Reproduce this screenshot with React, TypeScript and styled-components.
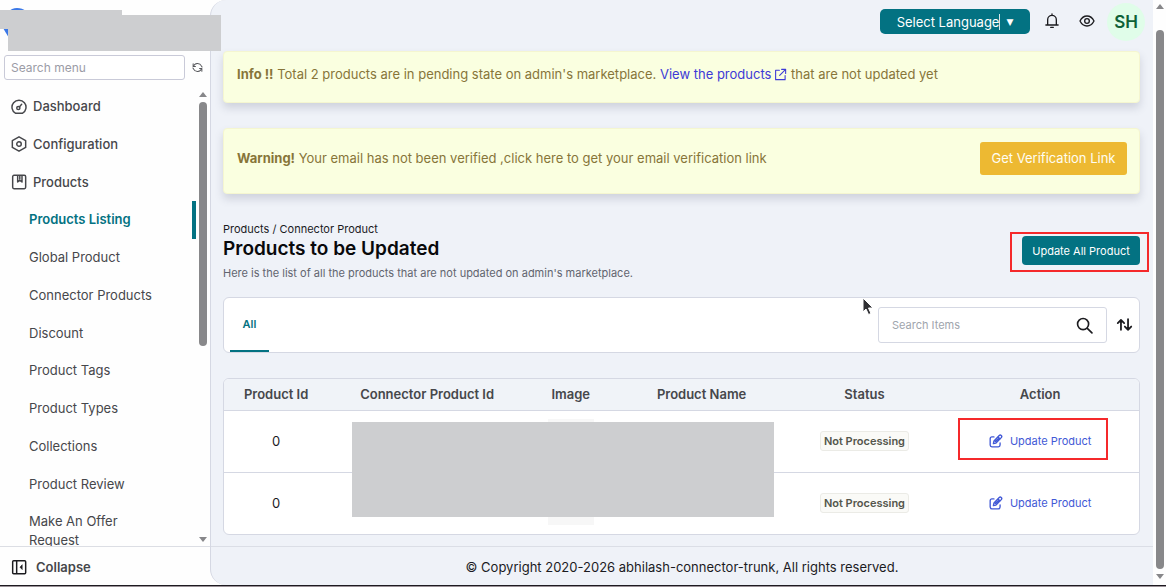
import React from "react";
import styled, { createGlobalStyle, css } from "styled-components";

const teal = "#037282";
const line = "#d5d8e3";
const ink = "#46474b";
const redaction = "#cdced0";

const GlobalStyle = createGlobalStyle`
  *, *::before, *::after { box-sizing: border-box; }
  body {
    margin: 0;
    background: #fefefe;
    color: #1b1b1f;
    font-family: Inter, "Liberation Sans", sans-serif;
    font-size: 13px;
    line-height: 18px;
  }
  button, input { font: inherit; }
  button { cursor: pointer; }
  a { text-decoration: none; }
  ul { list-style: none; margin: 0; padding: 0; }
`;

const Shell = styled.div`
  position: relative;
  display: grid;
  grid-template-columns: 210px minmax(0, 1fr) 13px;
  height: 100vh;
  overflow: hidden;
  border-bottom: 1px solid #9b9298;
  box-shadow: inset 0 -1px 0 #1d1a20;
  padding-bottom: 1px;
`;

const Sidebar = styled.aside`
  display: flex;
  flex-direction: column;
  min-height: 0;
`;

const Brand = styled.div`
  flex: none;
  height: 55px;
  padding: 8px 3px;
`;

const Redaction = styled.div<{ $x: number; $y: number; $w: number; $h: number }>`
  position: absolute;
  left: ${(p) => p.$x}px;
  top: ${(p) => p.$y}px;
  width: ${(p) => p.$w}px;
  height: ${(p) => p.$h}px;
  background: ${redaction};
`;

const MenuSearch = styled.div`
  display: flex;
  align-items: center;
  gap: 7px;
  padding: 0 7px 0 4px;
`;

const MenuInput = styled.input`
  width: 181px;
  height: 25px;
  padding: 0 6px;
  border: 1px solid #c9cad8;
  border-radius: 3px;
  background: #fff;
  font-size: 12px;
  &::placeholder { color: #9b9ca6; }
`;

const IconButton = styled.button`
  display: inline-flex;
  align-items: center;
  justify-content: center;
  padding: 0;
  border: 0;
  background: none;
  color: #1b1b1f;
`;

const RefreshButton = styled(IconButton)`
  color: #55565a;
`;

const MenuArea = styled.div`
  display: flex;
  flex: 1;
  min-height: 0;
  padding: 8px 0 0;
  overflow: hidden;
`;

const Menu = styled.nav`
  width: 196px;
`;

const TopList = styled.ul`
  display: grid;
  grid-auto-rows: 1fr;
  height: 113px;
`;

const SubList = styled.ul`
  display: grid;
  grid-template-rows: repeat(8, 1fr) 56px;
  height: 358px;
`;

const MenuLink = styled.a<{ $sub?: boolean; $active?: boolean }>`
  display: flex;
  align-items: center;
  gap: 6px;
  height: 100%;
  padding-left: ${(p) => (p.$sub ? 29 : 11)}px;
  padding-right: 40px;
  color: ${ink};
  line-height: 19px;
  font-weight: ${(p) => (p.$sub ? 400 : 500)};
  ${(p) =>
    p.$active &&
    css`
      color: ${teal};
      font-weight: 600;
      border-right: 4px solid ${teal};
    `}
`;

const ScrollTrack = styled.div`
  display: flex;
  flex-direction: column;
  align-items: center;
  width: 14px;
  padding: 4px 0;
  color: #87878a;
`;

const Thumb = styled.div<{ $grow: number }>`
  width: 8px;
  flex: ${(p) => p.$grow} 0 0;
  margin: 5px 0;
  border-radius: 4px;
  background: #88888a;
`;

const ThumbRest = styled.div<{ $grow: number }>`
  flex: ${(p) => p.$grow} 0 0;
`;

const Arrow = styled.span<{ $down?: boolean }>`
  flex: none;
  border: 4px solid transparent;
  border-top: ${(p) => (p.$down ? "5px solid currentColor" : "0")};
  border-bottom: ${(p) => (p.$down ? "0" : "5px solid currentColor")};
`;

const Collapse = styled.button`
  display: flex;
  align-items: center;
  flex: none;
  gap: 9px;
  height: 39px;
  padding: 2px 11px 0;
  border: 0;
  border-top: 1px solid #dcdee4;
  background: none;
  color: ${ink};
  font-weight: 600;
  svg { color: #1b1b1f; }
`;

const Main = styled.main`
  display: flex;
  flex-direction: column;
  min-width: 0;
  border-left: 1px solid ${line};
  border-radius: 16px 0 0 16px;
  background: #eff2f8;
`;

const Content = styled.div`
  padding: 0 13px 0 12px;
`;

const TopBar = styled.header`
  display: flex;
  align-items: center;
  justify-content: flex-end;
  height: 43px;
  padding-right: 8px;
`;

const LanguageButton = styled.button`
  display: flex;
  align-items: center;
  justify-content: center;
  width: 150px;
  height: 25px;
  margin-right: 14px;
  border: 0;
  border-radius: 5px;
  background: ${teal};
  color: #fff;
`;

const LanguageText = styled.span`
  margin-right: 6px;
  border-right: 1px solid #d6e6ea;
  line-height: 16px;
`;

const Caret = styled.span`
  font-family: "DejaVu Sans", sans-serif;
  font-size: 9px;
`;

const TopIcons = styled.div`
  display: flex;
  gap: 19px;
  margin-right: 12px;
  padding-bottom: 2px;
`;

const Avatar = styled.button`
  width: 38px;
  height: 38px;
  padding: 0;
  border: 0;
  border-radius: 50%;
  background: #e0fde9;
  color: #0e6137;
  font-size: 17px;
  font-weight: 600;
`;

const Notice = styled.section<{ $tall?: boolean }>`
  display: flex;
  justify-content: space-between;
  align-items: ${(p) => (p.$tall ? "center" : "flex-start")};
  height: ${(p) => (p.$tall ? 66 : 52)}px;
  margin-top: ${(p) => (p.$tall ? 25 : 8)}px;
  padding: ${(p) => (p.$tall ? "0 12px 6px 13px" : "13px 12px 0 13px")};
  border: 1px solid #f5f6d0;
  border-radius: 4px;
  background: #faffe0;
  box-shadow: 0 5px 9px rgba(80, 84, 110, 0.2);
  color: #877539;
  p { margin: 0; }
`;

const NoticeLink = styled.a`
  color: #3d3ad6;
  svg { vertical-align: -2px; margin-left: 3px; }
`;

const VerifyButton = styled.button`
  width: 147px;
  height: 33px;
  padding: 0;
  border: 0;
  border-radius: 3px;
  background: #edb932;
  color: #fffdf2;
`;

const TitleRow = styled.div`
  display: flex;
  justify-content: space-between;
  align-items: flex-start;
  margin-top: 27px;
`;

const Crumbs = styled.div`
  font-size: 11px;
  line-height: 16px;
`;

const Title = styled.h1`
  margin: 0;
  color: #09090b;
  font-size: 19px;
  line-height: 24px;
  font-weight: 600;
`;

const Subtitle = styled.p`
  margin: 4px 0 0;
  color: #62656f;
  font-size: 11px;
  line-height: 16px;
`;

const Callout = styled.span<{ $inset: string }>`
  position: relative;
  display: inline-flex;
  vertical-align: middle;
  &::after {
    content: "";
    position: absolute;
    inset: ${(p) => p.$inset};
    border: 2px solid #f5292b;
    pointer-events: none;
  }
`;

const UpdateAll = styled.button`
  width: 118px;
  height: 29px;
  padding: 0;
  border: 0;
  border-radius: 4px;
  background: ${teal};
  color: #fff;
  font-size: 11px;
`;

const TitleAction = styled.div`
  display: flex;
  padding-top: 15px;
`;

const Toolbar = styled.div`
  display: flex;
  align-items: center;
  justify-content: space-between;
  height: 56px;
  margin-top: 16px;
  padding: 0 6px;
  border: 1px solid ${line};
  border-radius: 6px;
  background: #fff;
`;

const Tab = styled.button`
  align-self: stretch;
  width: 39px;
  padding: 0 0 1px;
  border: 0;
  border-bottom: 2px solid ${teal};
  background: none;
  color: ${teal};
  font-size: 11px;
  font-weight: 600;
`;

const ToolbarRight = styled.div`
  display: flex;
  align-items: center;
  gap: 9px;
`;

const SearchBox = styled.label`
  display: flex;
  align-items: center;
  width: 229px;
  height: 36px;
  padding: 0 13px;
  border: 1px solid ${line};
  border-radius: 3px;
`;

const SearchInput = styled.input`
  flex: 1;
  min-width: 0;
  padding: 0;
  border: 0;
  outline: 0;
  background: none;
  font-size: 11px;
  &::placeholder { color: #a0a5ad; }
`;

const TableCard = styled.div`
  position: relative;
  margin-top: 25px;
  border: 1px solid ${line};
  border-radius: 6px;
  background: #fff;
  overflow: hidden;
`;

const Table = styled.table`
  width: 100%;
  table-layout: fixed;
  border-collapse: separate;
  border-spacing: 0;
  text-align: center;
`;

const HeadCell = styled.th<{ $w: string }>`
  width: ${(p) => p.$w};
  height: 31px;
  padding: 0 0 2px;
  background: #f0f3f8;
  color: ${ink};
  font-weight: 600;
`;

const Cell = styled.td`
  height: 62px;
  padding: 0 0 2px;
  border-top: 1px solid ${line};
  vertical-align: middle;
`;

const Thumbnail = styled.div`
  width: 46px;
  height: 44px;
  margin: 0 auto;
  background: #f7f7f7;
`;

const Status = styled.span`
  display: inline-block;
  padding: 0 3px;
  border: 1px solid #ebebe6;
  border-radius: 3px;
  background: #fafaf7;
  color: #54564c;
  font-size: 11px;
  font-weight: 600;
  vertical-align: middle;
`;

const UpdateLink = styled.a`
  display: inline-flex;
  align-items: center;
  gap: 7px;
  color: #4259d6;
  font-size: 11px;
  vertical-align: middle;
`;

const Footer = styled.footer`
  display: flex;
  align-items: center;
  justify-content: center;
  height: 39px;
  margin-top: auto;
  padding-top: 2px;
  border-top: 1px solid #dbdee6;
`;

const PageTrack = styled(ScrollTrack)`
  width: 13px;
  padding: 4px 0 6px;
`;

const PageThumb = styled(Thumb)`
  margin: 21px 0 5px;
`;

const Pointer = styled.svg`
  position: absolute;
  left: 861px;
  top: 297px;
`;

type IconProps = { size: number; w?: number; children: React.ReactNode };
const Icon = ({ size, w = 2, children }: IconProps) => (
  <svg width={size} height={size} viewBox="0 0 24 24" fill="none" stroke="currentColor"
    strokeWidth={w} strokeLinecap="round" strokeLinejoin="round" aria-hidden="true">
    {children}
  </svg>
);

const DashboardIcon = () => (
  <Icon size={16} w={2.2}>
    <path d="M7 21.500A10.500 10.500 0 1 1 17 21.500z" />
    <circle cx="11" cy="13.500" r="2.400" />
    <path d="M12.800 11.500 16 8" />
  </Icon>
);
const ConfigIcon = () => (
  <Icon size={16} w={2.2}>
    <path d="M12 1.200 22 6.800v10.400L12 22.800 2 17.200V6.800z" />
    <circle cx="12" cy="12" r="3.400" />
  </Icon>
);
const ProductsIcon = () => (
  <Icon size={16} w={2.2}>
    <rect x="2.500" y="2" width="19.500" height="20" rx="2" />
    <path d="M10 2.500v9.500l3.200-2.400 3.300 2.400V2.500M13.200 3v5" />
  </Icon>
);
const CollapseIcon = () => (
  <Icon size={16} w={2.2}>
    <rect x="2.500" y="2.500" width="19.500" height="19.500" rx="1.500" />
    <path d="M8.500 3v18.500" />
    <path d="m16.500 9-3 3.200 3 3.200z" fill="currentColor" strokeWidth={1} />
  </Icon>
);
const RefreshIcon = () => (
  <Icon size={11} w={2.2}>
    <path d="M3 9.500A9.500 9.500 0 0 1 20.500 8.500L22 11M21 14.500A9.500 9.500 0 0 1 3.500 15.500L2 13" />
    <path d="M2.500 4v6h5M21.500 20v-6h-5" />
  </Icon>
);
const BellIcon = () => (
  <Icon size={16}>
    <path d="M5.500 17.500V10a6.500 6.500 0 0 1 13 0v7.500M2.800 18h18.400M10 21.500h4M12 1.500v2" />
  </Icon>
);
const EyeIcon = () => (
  <Icon size={16}>
    <path d="M1.500 12C4 7 7.500 4.500 12 4.500S20 7 22.500 12C20 17 16.500 19.500 12 19.500S4 17 1.500 12z" />
    <circle cx="12" cy="12" r="3.500" />
  </Icon>
);
const ExternalIcon = () => (
  <Icon size={13}>
    <path d="M10 4H3v17.500h17.500V14M14 2.500h7.500V10M21 3 10.500 13.500" />
  </Icon>
);
const SearchIcon = () => (
  <Icon size={17} w={2.300}>
    <circle cx="10" cy="10" r="7.800" />
    <path d="m16 16 6.500 6.500" />
  </Icon>
);
const SortIcon = () => (
  <Icon size={17} w={2.500}>
    <path d="M7 18V4M2.500 8.500 7 4l4.500 4.500M17 3v15M12.500 13.500 17 18l4.500-4.500" />
  </Icon>
);
const EditIcon = () => (
  <Icon size={14} w={2.300}>
    <path d="M8.500 5H5a3 3 0 0 0-3 3v11a3 3 0 0 0 3 3h11a3 3 0 0 0 3-3v-3.500" />
    <path d="m8.500 12 9-9.300a2.300 2.300 0 0 1 3.600 3.500L12 15.500l-4.500 1zM15.500 5l3.500 3.500M11 13l5-5" />
  </Icon>
);

const topItems = [
  { label: "Dashboard", icon: <DashboardIcon /> },
  { label: "Configuration", icon: <ConfigIcon /> },
  { label: "Products", icon: <ProductsIcon /> },
];
const subItems = [
  "Products Listing", "Global Product", "Connector Products", "Discount", "Product Tags",
  "Product Types", "Collections", "Product Review", "Make An Offer Request",
];
const columns = [
  ["Product Id", "11.4%"], ["Connector Product Id", "21.6%"], ["Image", "9.8%"],
  ["Product Name", "18.8%"], ["Status", "16.8%"], ["Action", "21.6%"],
];

const UpdateProduct = () => (
  <UpdateLink href="#update"><EditIcon />Update Product</UpdateLink>
);

export default function App() {
  return (
    <>
      <GlobalStyle />
      <Shell>
        <Sidebar>
          <Brand>
            <svg width="28" height="30" viewBox="0 0 28 30" aria-hidden="true">
              <path d="M0 20C2 5 7 0 14 0s12 4 14 12L6 30z" fill="#3b78e7" />
            </svg>
          </Brand>
          <MenuSearch>
            <MenuInput aria-label="Search menu" placeholder="Search menu" />
            <RefreshButton aria-label="Refresh menu"><RefreshIcon /></RefreshButton>
          </MenuSearch>
          <MenuArea>
            <Menu>
              <TopList>
                {topItems.map((item) => (
                  <li key={item.label}>
                    <MenuLink href="#menu">{item.icon}{item.label}</MenuLink>
                  </li>
                ))}
              </TopList>
              <SubList>
                {subItems.map((label, i) => (
                  <li key={label}>
                    <MenuLink href="#menu" $sub $active={i === 0}>{label}</MenuLink>
                  </li>
                ))}
              </SubList>
            </Menu>
            <ScrollTrack>
              <Arrow />
              <Thumb $grow={244} />
              <ThumbRest $grow={186} />
              <Arrow $down />
            </ScrollTrack>
          </MenuArea>
          <Collapse><CollapseIcon />Collapse</Collapse>
        </Sidebar>

        <Main>
          <TopBar>
            <LanguageButton>
              <LanguageText>Select Language</LanguageText>
              <Caret>▼</Caret>
            </LanguageButton>
            <TopIcons>
              <IconButton aria-label="Notifications"><BellIcon /></IconButton>
              <IconButton aria-label="View store"><EyeIcon /></IconButton>
            </TopIcons>
            <Avatar>SH</Avatar>
          </TopBar>
          <Content>
            <Notice>
              <p>
                <strong>Info !!</strong> Total 2 products are in pending state on admin's marketplace.{" "}
                <NoticeLink href="#products">View the products<ExternalIcon /></NoticeLink>{" "}
                that are not updated yet
              </p>
            </Notice>
            <Notice $tall>
              <p>
                <strong>Warning!</strong> Your email has not been verified ,click here to get your email
                verification link
              </p>
              <VerifyButton>Get Verification Link</VerifyButton>
            </Notice>

            <TitleRow>
              <div>
                <Crumbs>Products / Connector Product</Crumbs>
                <Title>Products to be Updated</Title>
                <Subtitle>Here is the list of all the products that are not updated on admin's marketplace.</Subtitle>
              </div>
              <TitleAction>
                <Callout $inset="-4px -9px -7px -12px">
                  <UpdateAll>Update All Product</UpdateAll>
                </Callout>
              </TitleAction>
            </TitleRow>

            <Toolbar>
              <Tab>All</Tab>
              <ToolbarRight>
                <SearchBox>
                  <SearchInput aria-label="Search items" placeholder="Search Items" />
                  <SearchIcon />
                </SearchBox>
                <IconButton aria-label="Sort"><SortIcon /></IconButton>
              </ToolbarRight>
            </Toolbar>

            <TableCard>
              <Table>
                <thead>
                  <tr>
                    {columns.map(([name, width]) => (
                      <HeadCell key={name} $w={width} scope="col">{name}</HeadCell>
                    ))}
                  </tr>
                </thead>
                <tbody>
                  {[0, 1].map((row) => (
                    <tr key={row}>
                      <Cell>0</Cell>
                      <Cell />
                      <Cell><Thumbnail /></Cell>
                      <Cell />
                      <Cell><Status>Not Processing</Status></Cell>
                      <Cell>
                        {row === 0 ? (
                          <Callout $inset="-14px -17px -10px -31px"><UpdateProduct /></Callout>
                        ) : (
                          <UpdateProduct />
                        )}
                      </Cell>
                    </tr>
                  ))}
                </tbody>
              </Table>
              <Redaction $x={128} $y={43} $w={422} $h={95} />
            </TableCard>
          </Content>
          <Footer>© Copyright 2020-2026 abhilash-connector-trunk, All rights reserved.</Footer>
        </Main>

        <PageTrack>
          <Arrow />
          <PageThumb $grow={1} />
          <Arrow $down />
        </PageTrack>

        <Redaction $x={0} $y={10} $w={122} $h={19} />
        <Redaction $x={8} $y={15} $w={213} $h={36} />
        <Pointer width="14" height="20" viewBox="0 0 14 20" aria-hidden="true">
          <path d="M2 1v14l3-3 2.500 5.500 2.500-1L7.500 11H12z" fill="#2f2f33" stroke="#fff" />
        </Pointer>
      </Shell>
    </>
  );
}
